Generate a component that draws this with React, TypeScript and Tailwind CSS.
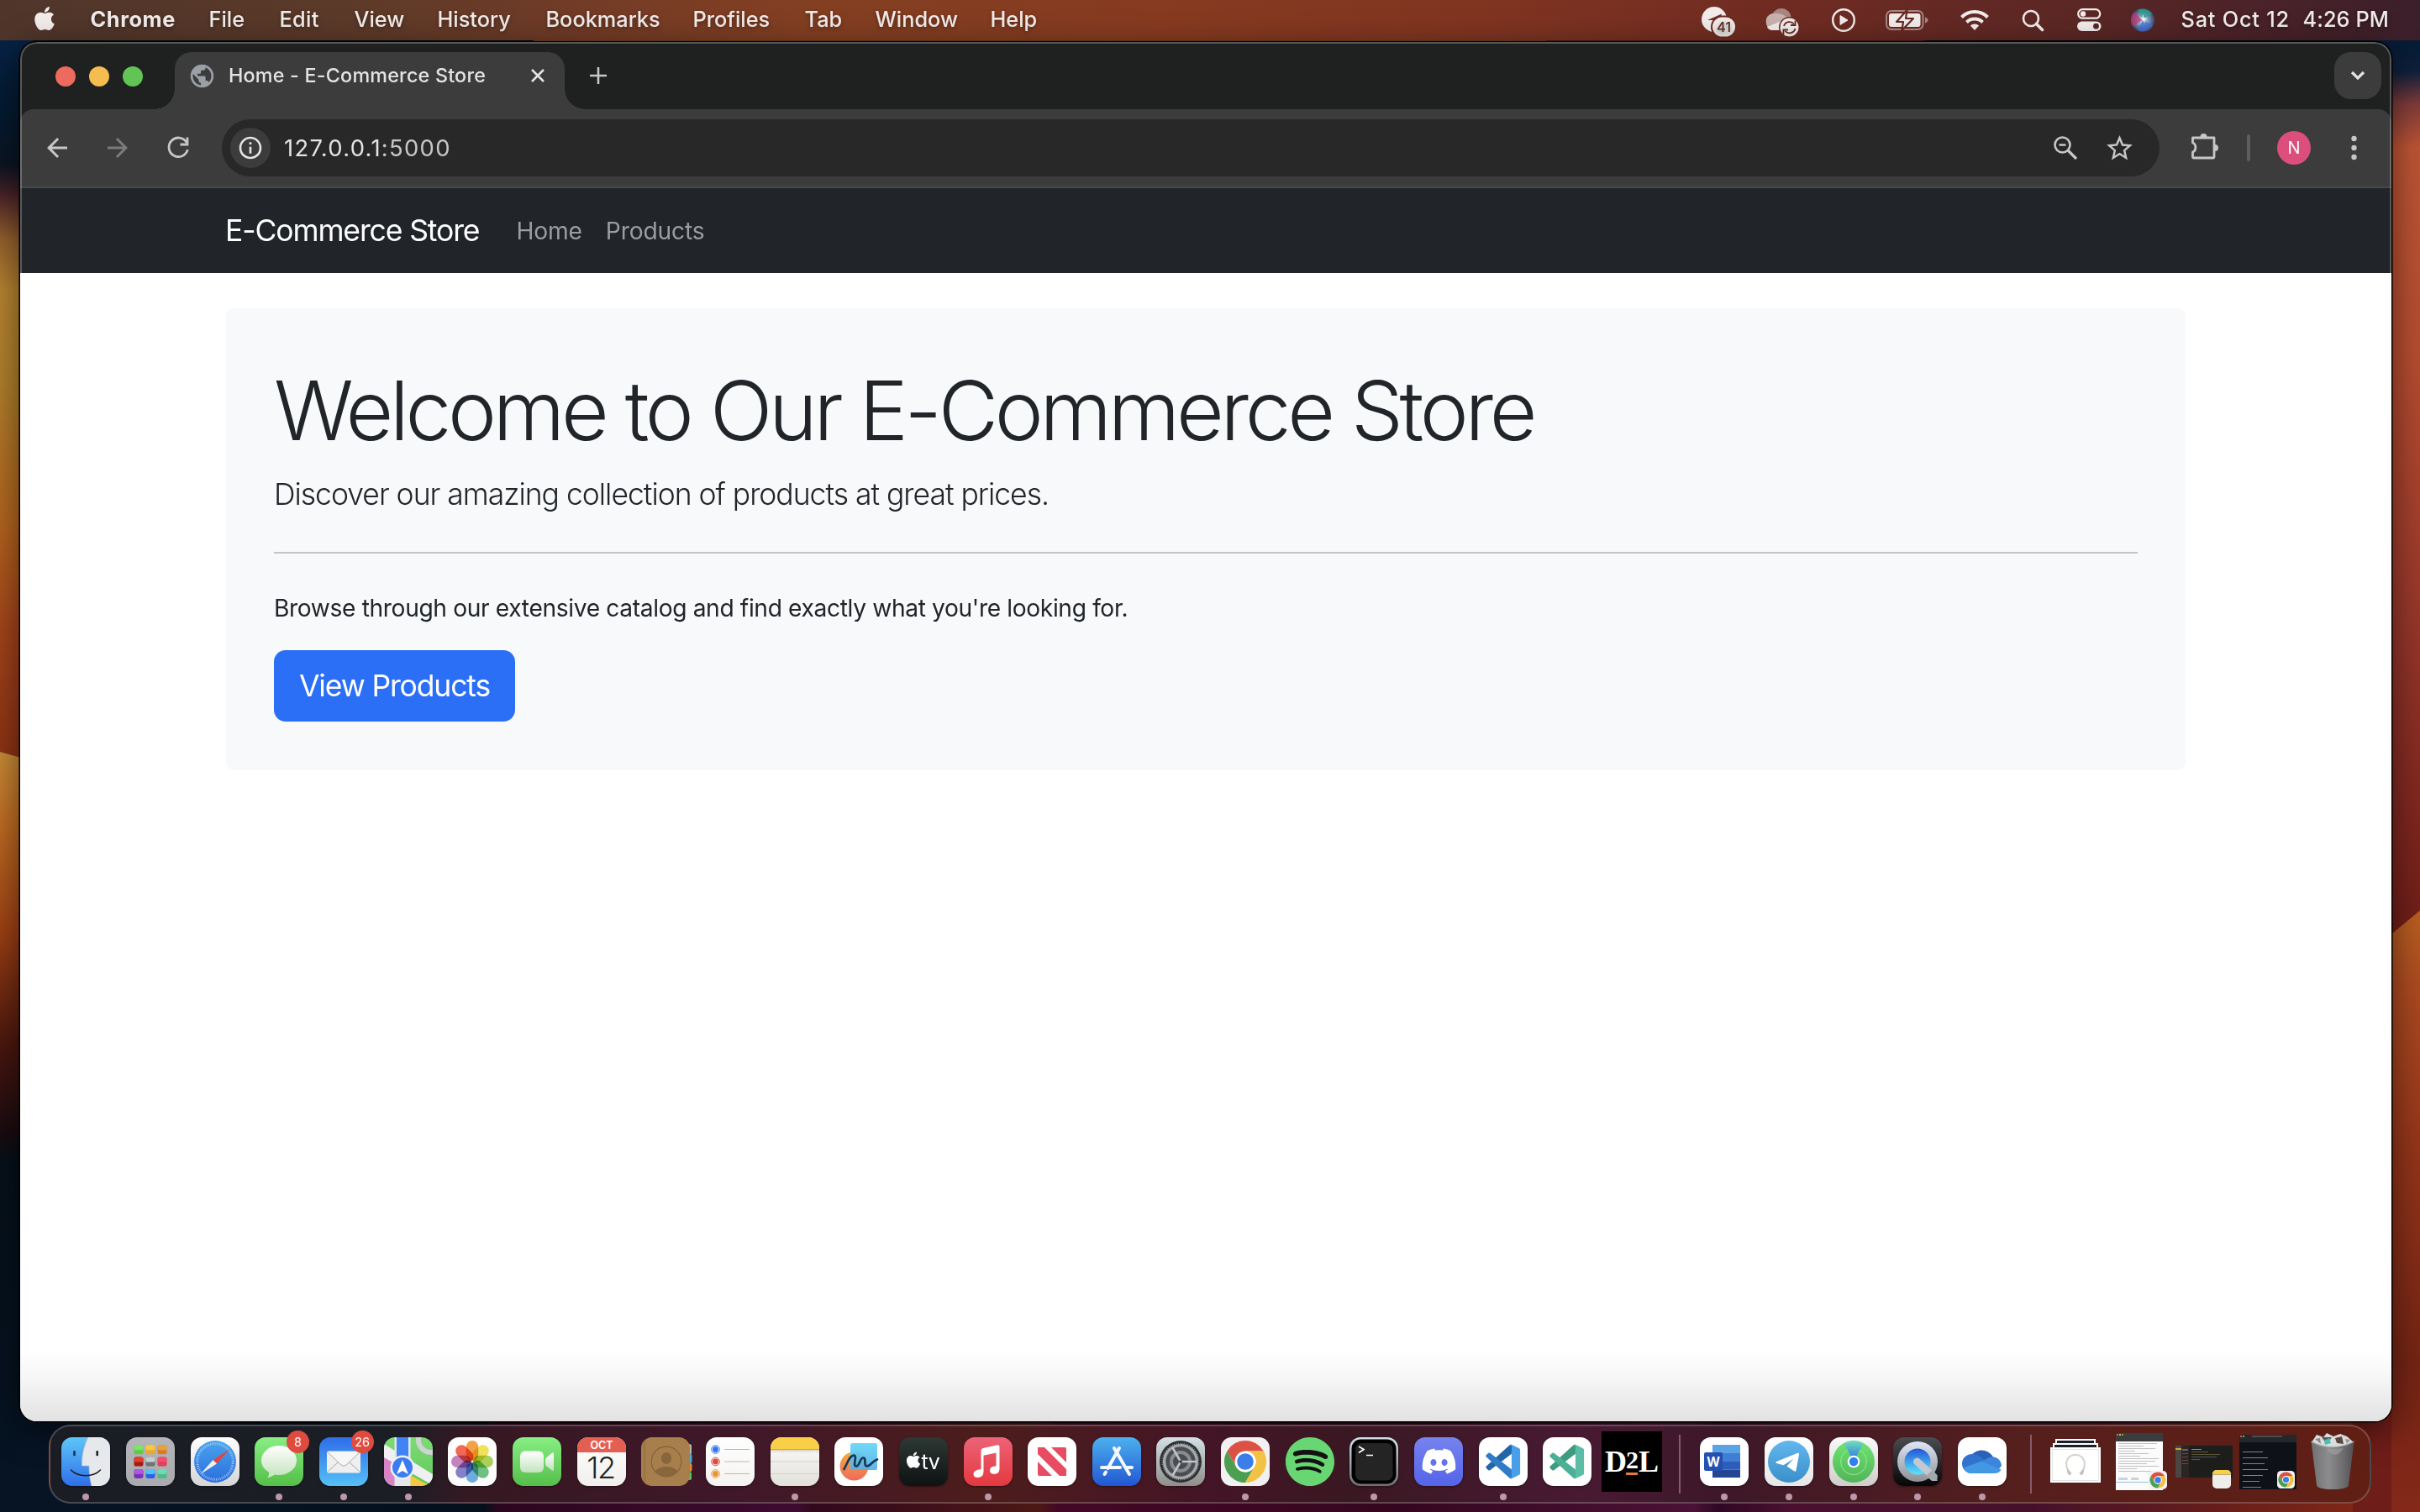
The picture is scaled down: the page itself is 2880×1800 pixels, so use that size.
import React from "react";
import { FaApple, FaDiscord, FaSpotify } from "react-icons/fa";
import { MdArrowBack, MdArrowForward, MdPublic, MdStarBorder, MdInfoOutline } from "react-icons/md";

/* ---------- Desktop wallpaper ---------- */

function Wallpaper() {
  return (
    <svg className="absolute inset-0" width="2880" height="1800" viewBox="0 0 2880 1800" preserveAspectRatio="none">
      <defs>
        <linearGradient id="wl" x1="0" y1="48" x2="0" y2="1800" gradientUnits="userSpaceOnUse">
          <stop offset="0" stopColor="#062244" />
          <stop offset="0.05" stopColor="#041a30" />
          <stop offset="0.085" stopColor="#0b1522" />
          <stop offset="0.105" stopColor="#4a2229" />
          <stop offset="0.135" stopColor="#94602c" />
          <stop offset="0.17" stopColor="#b78431" />
          <stop offset="0.23" stopColor="#b0802c" />
          <stop offset="0.33" stopColor="#b3641e" />
          <stop offset="0.4" stopColor="#a4441a" />
          <stop offset="0.49" stopColor="#8c3114" />
        </linearGradient>
        <linearGradient id="wl2" x1="0" y1="895" x2="0" y2="1800" gradientUnits="userSpaceOnUse">
          <stop offset="0" stopColor="#c98c36" />
          <stop offset="0.1" stopColor="#bd6a22" />
          <stop offset="0.24" stopColor="#9c3f14" />
          <stop offset="0.38" stopColor="#4d180f" />
          <stop offset="0.5" stopColor="#1a0b10" />
          <stop offset="0.54" stopColor="#05101a" />
          <stop offset="1" stopColor="#061424" />
        </linearGradient>
        <linearGradient id="wr" x1="2848" y1="60" x2="2880" y2="1110" gradientUnits="userSpaceOnUse">
          <stop offset="0" stopColor="#071c36" />
          <stop offset="0.025" stopColor="#10203c" />
          <stop offset="0.06" stopColor="#7c3a3a" />
          <stop offset="0.11" stopColor="#bc5434" />
          <stop offset="0.35" stopColor="#b54c30" />
          <stop offset="0.65" stopColor="#96362a" />
          <stop offset="1" stopColor="#6f1d18" />
        </linearGradient>
        <linearGradient id="wr2" x1="0" y1="1090" x2="0" y2="1800" gradientUnits="userSpaceOnUse">
          <stop offset="0" stopColor="#b85e20" />
          <stop offset="0.12" stopColor="#ab4a20" />
          <stop offset="0.4" stopColor="#93341a" />
          <stop offset="0.75" stopColor="#742414" />
          <stop offset="1" stopColor="#84281a" />
        </linearGradient>
        <linearGradient id="wb" x1="0" y1="0" x2="2880" y2="0" gradientUnits="userSpaceOnUse">
          <stop offset="0" stopColor="#061424" />
          <stop offset="0.2" stopColor="#04101c" />
          <stop offset="0.206" stopColor="#2c061e" />
          <stop offset="0.33" stopColor="#3e0b30" />
          <stop offset="0.336" stopColor="#32081c" />
          <stop offset="0.43" stopColor="#4c1816" />
          <stop offset="0.437" stopColor="#440826" />
          <stop offset="0.58" stopColor="#35061f" />
          <stop offset="0.7" stopColor="#4a1236" />
          <stop offset="0.71" stopColor="#2f0824" />
          <stop offset="0.74" stopColor="#4b1030" />
          <stop offset="0.84" stopColor="#45112a" />
          <stop offset="0.93" stopColor="#6c2018" />
          <stop offset="1" stopColor="#8a2a18" />
        </linearGradient>
      </defs>
      <rect width="2880" height="1800" fill="#04101a" />
      <path d="M0 48H40V906L0 895Z" fill="url(#wl)" />
      <path d="M0 895L40 906V1800H0Z" fill="url(#wl2)" />
      <rect x="24" y="1650" width="2824" height="150" fill="url(#wb)" />
      <path d="M2800 48H2880V1800H2800Z" fill="url(#wr)" />
      <path d="M2846 1112L2880 1084V1800H2846Z" fill="url(#wr2)" />
      <path d="M635 48H1840" stroke="#c9752a" strokeWidth="4" />
      <path d="M1840 48H2290" stroke="#8a3220" strokeWidth="4" />
    </svg>
  );
}

/* ---------- Menu bar ---------- */

const INK = "#f2eceb";

function StatusIcons() {
  return (
    <>
      <svg className="ml-0" width="42" height="48" viewBox="0 0 42 48">
        <circle cx="15" cy="23" r="15" fill={INK} />
        <path d="M7 24L24 16.500L21 26L14 24Z" fill="#6d2b21" />
        <rect x="11" y="18.500" width="31" height="27" rx="13.500" fill="#6d2b21" />
        <rect x="13" y="20.500" width="27" height="23" rx="11.500" fill={INK} />
        <text x="26.500" y="38" textAnchor="middle" fontSize="16.500" fontWeight="500" fill="#5b2a20" fontFamily="Inter, sans-serif">41</text>
      </svg>
      <svg className="ml-[33px]" width="44" height="48" viewBox="0 0 44 48">
        <circle cx="20" cy="21.500" r="11.500" fill="#a98680" />
        <path d="M9 16A10.500 10.500 0 0 0 9 36H20L30 24Q22 14 9 16Z" fill="#c9b1ad" />
        <path d="M3 32L30 21V36H9Q5 36 3 32Z" fill={INK} />
        <circle cx="29.500" cy="32.500" r="12.500" fill="#6a2a21" />
        <circle cx="29.500" cy="32.500" r="11" fill={INK} />
        <path d="M23 31A7 7 0 0 1 35 28.500M36.500 34A7 7 0 0 1 24.500 37" stroke="#64291f" strokeWidth="1.800" fill="none" />
        <path d="M36.500 24.500V30H31M22.500 41V35.500H28" stroke="#64291f" strokeWidth="1.800" fill="none" />
      </svg>
      <svg className="ml-[35px]" width="30" height="48" viewBox="0 0 30 48">
        <circle cx="15" cy="24" r="12.800" fill="none" stroke={INK} strokeWidth="2.400" />
        <path d="M11 18.500V29.500L20 24Z" fill={INK} stroke={INK} strokeWidth="1" strokeLinejoin="round" />
      </svg>
      <svg className="ml-[34px]" width="53" height="48" viewBox="0 0 53 48">
        <rect x="2" y="13" width="43.500" height="22" rx="6" fill="none" stroke="#a98680" strokeWidth="2" />
        <rect x="5" y="16" width="37.500" height="16" rx="3" fill={INK} />
        <path d="M48 20.500C50.500 21.500 51.500 22.500 51.500 24S50.500 26.500 48 27.500Z" fill="#a98680" />
        <path d="M26.500 12L14 26H22L20.500 36L34 22H25Z" fill={INK} stroke="#66281f" strokeWidth="2.200" strokeLinejoin="round" />
      </svg>
      <svg className="ml-[36px]" width="36" height="48" viewBox="0 0 36 48">
        <g fill="none" stroke={INK} strokeWidth="4">
          <path d="M2.500 20.500A22 22 0 0 1 33.500 20.500" />
          <path d="M8.500 26.500A13.500 13.500 0 0 1 27.500 26.500" />
        </g>
        <path d="M18 36L12.800 30.500A7.500 7.500 0 0 1 23.200 30.500Z" fill={INK} />
      </svg>
      <svg className="ml-[38px]" width="27" height="48" viewBox="0 0 27 48">
        <circle cx="11" cy="22" r="9" fill="none" stroke={INK} strokeWidth="2.600" />
        <path d="M17.500 28.500L24.500 35.500" stroke={INK} strokeWidth="3.600" strokeLinecap="round" />
      </svg>
      <svg className="ml-[38px]" width="30" height="48" viewBox="0 0 30 48">
        <rect x="2.200" y="11.200" width="26" height="10.500" rx="5.250" fill="none" stroke={INK} strokeWidth="2.200" />
        <circle cx="8" cy="16.500" r="3.200" fill={INK} />
        <rect x="1" y="25.500" width="28.500" height="11.500" rx="5.750" fill={INK} />
        <circle cx="23.500" cy="31.200" r="3.400" fill="#55262a" />
      </svg>
      <svg className="ml-[35px]" width="28" height="48" viewBox="0 0 28 48">
        <defs>
          <radialGradient id="siri" cx="0.500" cy="0.500" r="0.550">
            <stop offset="0" stopColor="#ffffff" />
            <stop offset="0.300" stopColor="#9db4d8" />
            <stop offset="1" stopColor="#27375e" />
          </radialGradient>
        </defs>
        <circle cx="14" cy="24" r="14" fill="url(#siri)" />
        <path d="M14 24L4 14A14 14 0 0 0 2 31Z" fill="#c4336d" opacity="0.700" />
        <path d="M14 24L8 12A14 14 0 0 1 25 16Z" fill="#2aa58a" opacity="0.700" />
        <path d="M14 24L8 36A14 14 0 0 0 26 30Z" fill="#3d6fd8" opacity="0.700" />
        <path d="M14 24l-4-4 3.500 1.500 0.500-5 1.500 5 4-0.500-3.500 3 1 4z" fill="#fff" opacity="0.900" />
      </svg>
    </>
  );
}

function MenuBar() {
  return (
    <header className="relative flex h-12 shrink-0 items-center bg-[linear-gradient(90deg,#4f352b_0%,#5b3a29_14%,#703b27_23%,#833f22_33%,#873b20_48%,#7f3421_62%,#6f2b22_74%,#5b2725_86%,#3b1f2b_100%)] text-[25.3px] font-medium text-[#f2eceb] [text-shadow:0_2px_5px_rgba(0,0,0,0.35)]">
      <FaApple className="mb-1 ml-[37px] mr-[38.500px] h-[32px] w-[32px]" />
      <nav className="flex items-center whitespace-nowrap pb-[3px]">
        <span className="w-[141px] font-bold tracking-[0.6px]">Chrome</span>
        <span className="w-[84px]">File</span>
        <span className="w-[89px] tracking-[0.3px]">Edit</span>
        <span className="w-[99px]">View</span>
        <span className="w-[129px]">History</span>
        <span className="w-[175px]">Bookmarks</span>
        <span className="w-[133px]">Profiles</span>
        <span className="w-[84px]">Tab</span>
        <span className="w-[137px]">Window</span>
        <span>Help</span>
      </nav>
      <div className="ml-auto flex items-center pr-[37px]">
        <StatusIcons />
        <div className="ml-[31.500px] flex w-[247.500px] justify-between whitespace-nowrap pb-[3px]">
          <span className="tracking-[0.8px]">Sat Oct 12</span>
          <span className="tracking-[0.1px]">4:26 PM</span>
        </div>
      </div>
    </header>
  );
}

/* ---------- Browser window ---------- */

function TabStrip() {
  return (
    <div className="flex h-20 shrink-0 items-start bg-[#1f2120] pt-3">
      <div className="flex gap-4 pl-[42px] pt-[17px]">
        <span className="h-6 w-6 rounded-full bg-[#ed6a5e]" />
        <span className="h-6 w-6 rounded-full bg-[#f5bd4f]" />
        <span className="h-6 w-6 rounded-full bg-[#61c454]" />
      </div>
      <div className="relative ml-[38px] flex h-[68px] w-[464px] items-start rounded-t-[20px] bg-[#3c3c3c] pl-[17px] pt-[11px] text-[#e3e3e3] before:absolute before:-left-6 before:bottom-0 before:h-6 before:w-6 before:bg-[radial-gradient(circle_at_0_0,transparent_23.5px,#3c3c3c_24px)] after:absolute after:-right-6 after:bottom-0 after:h-6 after:w-6 after:bg-[radial-gradient(circle_at_100%_0,transparent_23.5px,#3c3c3c_24px)]">
        <div className="flex h-[34px] w-full items-center">
          <MdPublic className="h-[33px] w-[33px] -ml-[1px] text-[#9aa0a6]" />
          <span className="ml-[15px] whitespace-nowrap text-[23.3px] font-medium tracking-[0.22px]">Home - E-Commerce Store</span>
          <svg className="ml-auto mr-[23px]" width="18" height="18" viewBox="0 0 18 18" stroke="#e3e3e3" strokeWidth="2.600">
            <path d="M2 2L16 16M16 2L2 16" />
          </svg>
        </div>
      </div>
      <svg className="ml-[29px] mt-[17px]" width="22" height="22" viewBox="0 0 22 22" stroke="#c7c7c7" strokeWidth="2.600">
        <path d="M11 1V21M1 11H21" />
      </svg>
      <div className="ml-auto mr-[12px] flex h-14 w-14 items-center justify-center rounded-[20px] bg-[#3c3c3c]">
        <svg width="18" height="12" viewBox="0 0 18 12" fill="none" stroke="#e3e3e3" strokeWidth="3.200">
          <path d="M2 2L9 9L16 2" />
        </svg>
      </div>
    </div>
  );
}

function Toolbar() {
  return (
    <div className="bg-[#1f2120]">
      <div className="flex h-[94px] items-center rounded-t-[16px] border-b-2 border-[#474747] bg-[#3c3c3c] text-[#c7c7c7]">
        <MdArrowBack className="ml-[26px] h-9 w-9" />
        <MdArrowForward className="ml-9 h-9 w-9 text-[#7b7b7b]" />
        <svg className="ml-[40px]" width="28" height="28" viewBox="0 0 28 28" fill="none" stroke="#c7c7c7" strokeWidth="2.800">
          <path d="M24 7.500A11.300 11.300 0 1 0 25.300 16" />
          <path d="M25 1.500V10H16.500" />
        </svg>
        <div className="ml-[38px] flex h-[68px] w-[2306px] items-center rounded-full bg-[#282828] pl-[10px]">
          <div className="flex h-12 w-12 items-center justify-center rounded-full bg-[#3c3c3c]">
            <MdInfoOutline className="h-8 w-8 text-[#e3e3e3]" />
          </div>
          <span className="ml-[16px] pt-[1px] text-[27.4px] tracking-[1.3px] text-[#e3e3e3]">
            127.0.0.1<span className="text-[#c7c7c7]">:5000</span>
          </span>
          <svg className="ml-auto" width="30" height="30" viewBox="0 0 30 30" fill="none" stroke="#c7c7c7">
            <circle cx="11.500" cy="11.500" r="9" strokeWidth="2.600" />
            <path d="M7.500 11.500H15.500" strokeWidth="2.400" />
            <path d="M18 18L28 28" strokeWidth="3.200" />
          </svg>
          <MdStarBorder className="ml-[31px] mr-[29px] h-[37px] w-[37px]" />
        </div>
        <svg className="ml-[36px]" width="36" height="36" viewBox="0 0 36 36" fill="none" stroke="#c7c7c7" strokeWidth="2.800" strokeLinejoin="round">
          <path d="M3.500 6H29V29Q29 30 28 30H4.500Q3.500 30 3.500 29V23C8 21.500 8 13.500 3.500 12Z" />
          <path d="M12.500 5A4 4 0 0 1 20.500 5ZM30 14A4 4 0 0 1 30 22Z" fill="#c7c7c7" stroke="none" />
        </svg>
        <span className="ml-[32px] h-8 w-1 rounded bg-[#5e5e5e]" />
        <span className="ml-[32px] flex h-10 w-10 items-center justify-center rounded-full bg-[#dc4e7c] text-[20px] text-white">N</span>
        <svg className="ml-[48px]" width="7" height="30" viewBox="0 0 7 30" fill="#c7c7c7">
          <circle cx="3.500" cy="4" r="3.200" />
          <circle cx="3.500" cy="15" r="3.200" />
          <circle cx="3.500" cy="26" r="3.200" />
        </svg>
      </div>
    </div>
  );
}

function StorePage() {
  return (
    <div className="flex grow flex-col bg-white text-[#212529]">
      <nav className="flex h-[101px] items-center bg-[#212529] pl-[244px] text-white">
        <a className="whitespace-nowrap text-[35.500px] tracking-[-1.120px]">E-Commerce Store</a>
        <a className="ml-[44px] pt-[1px] text-[28.200px] tracking-[-0.150px] text-[#9b9d9f]">Home</a>
        <a className="ml-[28px] pt-[1px] text-[28.200px] tracking-[-0.150px] text-[#9b9d9f]">Products</a>
      </nav>
      <main className="mx-[245px] mt-[42px] rounded-[9px] bg-[#f8f9fa] px-[57px] pb-[58px] pt-[61px]">
        <h1 className="h-[121px] whitespace-nowrap text-[98px] font-light leading-[121px] tracking-[-4.300px]">
          Welcome to Our E-Commerce Store
        </h1>
        <p className="mt-[13px] whitespace-nowrap text-[35.500px] font-light leading-[54px] tracking-[-1.010px]">
          Discover our amazing collection of products at great prices.
        </p>
        <hr className="mt-[41px] h-[2px] border-0 bg-[#c3c4c6]" />
        <p className="mt-[44px] whitespace-nowrap text-[28.200px] leading-[43px] tracking-[-0.370px]">
          Browse through our extensive catalog and find exactly what you're looking for.
        </p>
        <a className="mt-[28px] flex h-[85px] w-[287px] items-center justify-center whitespace-nowrap rounded-[14px] bg-[#2b6ff6] pt-[1px] text-[35.500px] tracking-[-1.150px] text-white">
          View Products
        </a>
      </main>
      <div className="mt-auto h-[84px] bg-[linear-gradient(180deg,#ffffff_0%,#f7f7f7_35%,#e2e2e2_100%)]" />
    </div>
  );
}

function BrowserWindow() {
  return (
    <section className="relative ml-6 mt-[2px] flex h-[1642px] w-[2822px] shrink-0 flex-col overflow-hidden rounded-[20px] shadow-[0_0_0_1.500px_#000,0_10px_40px_rgba(0,0,0,0.55)]">
      <TabStrip />
      <Toolbar />
      <StorePage />
      <div className="pointer-events-none absolute inset-0 rounded-[20px] border-2 border-b-0 border-white/25 [mask-image:linear-gradient(#000_275px,transparent_275px)]" />
    </section>
  );
}

/* ---------- Dock icons ---------- */

function Tile({ from, to, children }: { from: string; to: string; children?: React.ReactNode }) {
  const id = "g" + (from + to).replace(/#/g, "");
  return (
    <svg width="58" height="58" viewBox="0 0 58 58" className="rounded-[13px] shadow-[0_1px_3px_rgba(0,0,0,0.4)]">
      <defs>
        <linearGradient id={id} x1="0" y1="0" x2="0" y2="1">
          <stop offset="0" stopColor={from} />
          <stop offset="1" stopColor={to} />
        </linearGradient>
      </defs>
      <rect width="58" height="58" fill={`url(#${id})`} />
      {children}
    </svg>
  );
}

function Finder() {
  return (
    <Tile from="#5ec6f8" to="#2f6fe9">
      <path d="M32 0C27 10 24 22 24.500 34H33C33 43 34 51 36 58H58V0Z" fill="#e6e8ec" />
      <path d="M32 0C27 10 24 22 24.500 34H33C33 43 34 51 36 58" fill="none" stroke="#b9c6d8" strokeWidth="0.600" />
      <rect x="14.200" y="16" width="2.600" height="6.200" rx="1" fill="#16324d" />
      <rect x="41.400" y="16" width="2.600" height="6.200" rx="1" fill="#222" />
      <path d="M11.500 39Q18 45.700 29 45.700T46.500 39" fill="none" stroke="#1a1f26" strokeWidth="1.600" strokeLinecap="round" />
    </Tile>
  );
}

function Launchpad() {
  const colors = [
    ["#7ee36a", "#5ccb46"], ["#f8c83f", "#eaa92e"], ["#eda03a", "#d97a27"],
    ["#e0402f", "#a8190f"], ["#c9cdd1", "#6f7478"], ["#f0506a", "#e23f5a"],
    ["#b055e0", "#7c2fb8"], ["#4fc2fa", "#2a62e8"], ["#6fd9b4", "#4fb98a"],
  ];
  return (
    <Tile from="#b3b5b8" to="#a9abae">
      {colors.map(([a, b], i) => (
        <g key={i} transform={`translate(${9.500 + (i % 3) * 14} ${9.300 + Math.floor(i / 3) * 14.300})`}>
          <rect width="11" height="11" rx="2.600" fill={b} />
          <rect width="11" height="6" rx="2.600" fill={a} />
        </g>
      ))}
    </Tile>
  );
}

function Safari() {
  return (
    <Tile from="#ffffff" to="#d5d5d5">
      <defs>
        <linearGradient id="saf" x1="0" y1="0" x2="0" y2="1">
          <stop offset="0" stopColor="#4aa4ee" />
          <stop offset="1" stopColor="#2c6ede" />
        </linearGradient>
      </defs>
      <circle cx="29" cy="29" r="25" fill="url(#saf)" />
      <circle cx="29" cy="29" r="21.300" fill="none" stroke="#c3dcf8" strokeWidth="3" strokeDasharray="0.700 1.530" />
      <path d="M46.500 14L31 31.500L26.500 27Z" fill="#e0473c" />
      <path d="M11.500 44L31 31.500L26.500 27Z" fill="#eef1f5" />
    </Tile>
  );
}

function Messages() {
  return (
    <Tile from="#88ee84" to="#54bf48">
      <defs>
        <linearGradient id="bub" x1="0" y1="0" x2="0" y2="1">
          <stop offset="0" stopColor="#ffffff" />
          <stop offset="1" stopColor="#c7e4c0" />
        </linearGradient>
      </defs>
      <ellipse cx="29" cy="27.500" rx="21" ry="17.500" fill="url(#bub)" />
      <path d="M17 40Q18 45 15 48Q21 47.500 25 43Z" fill="#cde8c6" />
    </Tile>
  );
}

function Mail() {
  return (
    <Tile from="#2f6de8" to="#56c0f7">
      <rect x="9" y="16.500" width="40" height="26" rx="2" fill="#efefef" />
      <path d="M9.500 41.500L22.500 29.500M48.500 41.500L35.500 29.500" stroke="#9d9d9d" strokeWidth="0.900" />
      <path d="M9.500 17.500L26 33Q29 35.600 32 33L48.500 17.500" fill="#f7f7f7" stroke="#a9a9a9" strokeWidth="1" />
    </Tile>
  );
}

function Maps() {
  return (
    <Tile from="#7edb74" to="#62c95c">
      <path d="M0 22L30 45V58H0Z" fill="#d783c6" />
      <path d="M22 40L58 60H22Z" fill="#f6c83f" />
      <path d="M0 8L58 44V57L0 24Z" fill="#f0f0f3" />
      <rect x="12.500" width="19" height="58" fill="#e4e6ea" />
      <rect x="15" width="14" height="40" fill="#3f83f4" />
      <circle cx="56" cy="3" r="15" fill="none" stroke="#cfd3d6" strokeWidth="6" />
      <circle cx="22" cy="36" r="14.500" fill="#eceef2" />
      <circle cx="22" cy="36" r="12" fill="#3b7cf0" />
      <path d="M22 27L29 44L22 40L15 44Z" fill="#fff" />
    </Tile>
  );
}

function Photos() {
  const petals = ["#f29a38", "#efe04a", "#a5cf4f", "#67bd7c", "#62a8dc", "#7d78c4", "#c07ab8", "#ef5b4a"];
  return (
    <Tile from="#ffffff" to="#fbfbfb">
      <g className="[&>rect]:mix-blend-multiply">
        {petals.map((c, i) => (
          <rect key={c} x="21.800" y="4" width="14.400" height="24" rx="7.200" fill={c} opacity="0.920" transform={`rotate(${i * 45} 29 29)`} />
        ))}
      </g>
    </Tile>
  );
}

function FaceTime() {
  return (
    <Tile from="#87ef83" to="#56be4a">
      <defs>
        <linearGradient id="ft" x1="0" y1="0" x2="0" y2="1">
          <stop offset="0" stopColor="#ffffff" />
          <stop offset="1" stopColor="#c3e3bd" />
        </linearGradient>
      </defs>
      <rect x="9" y="16.500" width="28" height="25.500" rx="6" fill="url(#ft)" />
      <path d="M39 27Q39 25.500 40.500 24L47 18.800Q49 17.500 49 20V38Q49 40.500 47 39.500L40.500 34.500Q39 33.500 39 31.500Z" fill="url(#ft)" />
    </Tile>
  );
}

function CalendarIcon() {
  return (
    <Tile from="#ffffff" to="#f0efed">
      <rect width="58" height="18" fill="#e35f52" />
      <text x="29" y="14" textAnchor="middle" fontSize="12.500" fontWeight="600" fill="#fff" fontFamily="Inter, sans-serif">OCT</text>
      <text x="28" y="49" textAnchor="middle" fontSize="36" fontWeight="300" letterSpacing="-1.500" fill="#262626" fontFamily="Inter, sans-serif">12</text>
    </Tile>
  );
}

function Contacts() {
  return (
    <svg width="62" height="58" viewBox="0 0 62 58" className="ml-1">
      <rect x="46" y="8" width="14" height="13" rx="2.500" fill="#b9b4a8" />
      <rect x="46" y="20" width="14.500" height="11" rx="2" fill="#4fa6d8" />
      <rect x="46" y="31" width="14.500" height="10" rx="2" fill="#e58a34" />
      <rect x="46" y="41" width="14" height="10" rx="2.500" fill="#5cc35c" />
      <rect width="58" height="58" rx="13" fill="#a67f4c" />
      <path d="M4 4V54" stroke="#8b693c" strokeWidth="1" />
      <circle cx="30" cy="29" r="17.800" fill="none" stroke="#83623a" strokeWidth="1.200" />
      <ellipse cx="30" cy="25" rx="6" ry="7" fill="#87663d" />
      <path d="M16.500 40.500Q21 35 30 35T43.500 40.500A17.800 17.800 0 0 1 16.500 40.500Z" fill="#87663d" />
    </svg>
  );
}

function Reminders() {
  return (
    <Tile from="#ffffff" to="#f4f3f1">
      {["#2f74ee", "#dd4a40", "#e8952f"].map((c, i) => (
        <g key={c} transform={`translate(0 ${14.500 + i * 14.500})`}>
          <circle cx="11.500" r="4.800" fill="none" stroke={c} strokeWidth="1" />
          <circle cx="11.500" r="3.400" fill={c} />
          <path d="M22 0H52" stroke="#b9b9b9" strokeWidth="1" />
        </g>
      ))}
    </Tile>
  );
}

function Notes() {
  return (
    <Tile from="#fdfdfb" to="#e3e0db">
      <rect width="58" height="14" fill="#f8cf47" />
      <rect y="14" width="58" height="1.500" fill="#bda77a" />
      <path d="M1 17.300H58" stroke="#aaa" strokeWidth="0.900" strokeDasharray="1 1.300" />
      <path d="M0 29H58M0 43.500H58" stroke="#cfcdc9" strokeWidth="0.900" />
    </Tile>
  );
}

function Freeform() {
  return (
    <Tile from="#ffffff" to="#fefefe">
      <defs>
        <linearGradient id="ffo" x1="0" y1="0" x2="0" y2="1">
          <stop offset="0" stopColor="#f3ad3c" />
          <stop offset="1" stopColor="#ee6a5e" />
        </linearGradient>
        <linearGradient id="ffb" x1="0" y1="0" x2="0" y2="1">
          <stop offset="0" stopColor="#65d6fb" />
          <stop offset="1" stopColor="#5aaee0" />
        </linearGradient>
      </defs>
      <circle cx="23.500" cy="34.500" r="17" fill="url(#ffo)" />
      <rect x="19" y="7" width="32" height="32" rx="2.500" fill="url(#ffb)" opacity="0.930" />
      <path d="M11.500 38C16 30 18 22 23 21.500C28 21.500 21 34.500 26 34.500C30.500 34 30 24.500 34.500 24.500C38.500 24.500 34 34.500 39 34.500C43.500 34 45 28 51 26.500" fill="none" stroke="#123a5c" strokeWidth="2.700" strokeLinecap="round" />
    </Tile>
  );
}

function AppleTV() {
  return (
    <Tile from="#2d3834" to="#0e1213">
      <foreignObject x="7" y="16" width="20" height="24">
        <FaApple className="h-[22px] w-[20px] text-white" />
      </foreignObject>
      <text x="26.500" y="37.500" fontSize="25" fill="#fff" fontFamily="Inter, sans-serif" letterSpacing="-0.500">tv</text>
    </Tile>
  );
}

function Music() {
  return (
    <Tile from="#ec6377" to="#e5383f">
      <path d="M20.500 16.500Q20.500 13.500 23 13L40 9.200Q42.500 8.800 42.500 11.500V37.500Q42.500 43.800 36 43.800Q31 43.800 31 39.500Q31 34.500 38.500 34.200V18.500L23.500 21.800V41Q23.500 48 16.500 48Q11.500 48 11.500 43.500Q11.500 39 20.500 38Z" fill="#fff" />
    </Tile>
  );
}

function News() {
  return (
    <Tile from="#ffffff" to="#fefefe">
      <path d="M12 12H20L46 38V46H38L12 20Z" fill="#e74c62" />
      <path d="M28 12H44Q46 12 46 14V30Z" fill="#e74c62" />
      <path d="M12 29L29 46H14Q12 46 12 44Z" fill="#e74c62" />
    </Tile>
  );
}

function AppStore() {
  return (
    <Tile from="#4cb0ee" to="#2257d3">
      <g stroke="#f4f8ff" strokeWidth="4" strokeLinecap="round">
        <path d="M32 13L18.500 37" />
        <path d="M26 13L44 44" />
        <path d="M11 36H33M39.500 36H47" />
        <path d="M16 41.500L14.500 44" />
      </g>
    </Tile>
  );
}

function Settings() {
  return (
    <Tile from="#d3e0e6" to="#8f8e8a">
      <circle cx="29" cy="29" r="25" fill="#33363a" />
      <circle cx="29" cy="29" r="22.500" fill="#8a8d90" stroke="#25272a" strokeWidth="3" strokeDasharray="1.200 1.200" />
      <circle cx="29" cy="29" r="19.500" fill="none" stroke="#a9acaf" strokeWidth="2.600" />
      <circle cx="29" cy="29" r="17.500" fill="#4a4d51" />
      <circle cx="29" cy="29" r="11" fill="none" stroke="#898c8f" strokeWidth="4" />
      <circle cx="29" cy="29" r="7.500" fill="#4a4d51" />
      <path d="M29 29H48M29 29L19.500 12.500M29 29L19.500 45.500" stroke="#c1c4c7" strokeWidth="2.600" />
      <circle cx="29" cy="29" r="1.800" fill="#3a3d40" />
    </Tile>
  );
}

function ChromeGlyph({ size }: { size: number }) {
  return (
    <svg width={size} height={size} viewBox="0 0 58 58" className="rounded-[22%]">
      <rect width="58" height="58" fill="#f2f1f2" />
      <g transform="translate(4 4) scale(1.042)">
        <path d="M44.800 12H24L13.600 30L3.200 12A24 24 0 0 1 44.800 12Z" fill="#dd5144" />
        <path d="M3.200 12L13.600 30A12 12 0 0 0 34.400 30L24 48A24 24 0 0 1 3.200 12Z" fill="#4c9f51" />
        <path d="M44.800 12H24A12 12 0 0 1 34.400 30L24 48A24 24 0 0 0 44.800 12Z" fill="#f3c144" />
        <circle cx="24" cy="24" r="12" fill="#fff" />
        <circle cx="24" cy="24" r="9.400" fill="#3b7de9" />
      </g>
    </svg>
  );
}

function Terminal() {
  return (
    <Tile from="#cfe2ea" to="#6e7072">
      <rect x="2.500" y="2.500" width="53" height="53" rx="11" fill="#000" />
      <rect x="7" y="7" width="44.500" height="44.500" rx="7" fill="#242424" />
      <path d="M11 11L17 14.500L11 18.500" fill="none" stroke="#fff" strokeWidth="1.700" />
      <path d="M20 21.500H28" stroke="#fff" strokeWidth="1.500" />
    </Tile>
  );
}

function Discord() {
  return (
    <Tile from="#7683ee" to="#5564ea">
      <foreignObject x="7.500" y="7" width="44" height="44">
        <FaDiscord className="h-[43px] w-[43px] text-white" />
      </foreignObject>
    </Tile>
  );
}

function Code({ dark, mid, light }: { dark: string; mid: string; light: string }) {
  return (
    <Tile from="#ffffff" to="#fefefe">
      <g transform="translate(8.300 8.600) scale(1.700)">
        <path d="M0.326 15.260L16.505 0.500Q17.300 -0.100 18.210 0.210L18.004 6.552L2.926 17.997A1 1 0 0 1 1.650 17.940L0.327 16.739A1 1 0 0 1 0.326 15.260Z" fill={dark} />
        <path d="M0.326 8.740L16.505 23.500Q17.300 24.100 18.210 23.790L18.004 17.448L2.926 6.003A1 1 0 0 0 1.650 6.060L0.327 7.261A1 1 0 0 0 0.326 8.740Z" fill={mid} />
        <path d="M18.210 0.210L23.150 2.587A1.500 1.500 0 0 1 24 3.939V20.060A1.500 1.500 0 0 1 23.150 21.413L18.210 23.790Q17.300 24.100 16.505 23.500Q18 23.800 18.004 22.500V1.500Q18 0.200 16.505 0.500Q17.300 -0.100 18.210 0.210Z" fill={light} />
      </g>
    </Tile>
  );
}

function D2L() {
  return (
    <div className="relative flex h-[72px] w-[72px] items-center justify-center bg-black font-['Liberation_Serif',serif] text-[36px] font-bold text-white">
      <span className="tracking-[-1px]">D</span>
      <span className="relative -top-[3px] text-[30px] after:absolute after:bottom-[4px] after:left-0 after:h-[2.500px] after:w-[14px] after:bg-[#e27b35]">2</span>
      <span>L</span>
    </div>
  );
}

function Word() {
  return (
    <Tile from="#ffffff" to="#fefefe">
      <g>
        <rect x="15" y="9" width="33" height="10" fill="#5ba3e6" />
        <rect x="15" y="19" width="33" height="10" fill="#3f7fd3" />
        <rect x="15" y="29" width="33" height="9.500" fill="#2c5dbb" />
        <rect x="15" y="38.500" width="33" height="9.500" fill="#234592" />
      </g>
      <rect x="5" y="18" width="22" height="22" rx="2" fill="#2450b0" />
      <text x="16" y="34.500" textAnchor="middle" fontSize="15.500" fontWeight="700" fill="#fff" fontFamily="Open Sans, sans-serif">W</text>
    </Tile>
  );
}

function Telegram() {
  return (
    <Tile from="#ffffff" to="#e6e6e6">
      <defs>
        <linearGradient id="tg" x1="0" y1="0" x2="0" y2="1">
          <stop offset="0" stopColor="#63b7ef" />
          <stop offset="1" stopColor="#3a8fca" />
        </linearGradient>
      </defs>
      <circle cx="29" cy="29" r="25" fill="url(#tg)" />
      <path d="M14 29L39.500 18.800Q41.500 18.300 41 20.500L37.500 39.500Q36.800 41.500 35 40.300L26.500 34.500L34.500 25.500L22.500 33.300L14.300 31Q12.500 30 14 29Z" fill="#fff" />
    </Tile>
  );
}

function FindMy() {
  return (
    <Tile from="#fafafa" to="#cfcdcb">
      <defs>
        <linearGradient id="fm" x1="0" y1="0" x2="0" y2="1">
          <stop offset="0" stopColor="#6de56f" />
          <stop offset="1" stopColor="#52b45a" />
        </linearGradient>
        <linearGradient id="fmb" x1="0" y1="0" x2="0" y2="1">
          <stop offset="0" stopColor="#6fe0b8" />
          <stop offset="1" stopColor="#2a68f0" />
        </linearGradient>
      </defs>
      <circle cx="29" cy="29" r="25" fill="url(#fm)" />
      <circle cx="29" cy="29" r="15.500" fill="none" stroke="#93ea90" strokeWidth="1" />
      <path d="M29 29L17.500 7A25 25 0 0 1 40.500 7Z" fill="url(#fmb)" />
      <circle cx="29" cy="29" r="7.300" fill="#fff" />
      <circle cx="29" cy="29" r="5.200" fill="#2f7ff0" />
    </Tile>
  );
}

function QuickTime() {
  return (
    <Tile from="#4a4c50" to="#060607">
      <defs>
        <linearGradient id="qtr" x1="0" y1="0" x2="0" y2="1">
          <stop offset="0" stopColor="#dfe6f5" />
          <stop offset="1" stopColor="#8d9196" />
        </linearGradient>
        <linearGradient id="qtb" x1="0" y1="0" x2="0" y2="1">
          <stop offset="0" stopColor="#2456d8" />
          <stop offset="1" stopColor="#5ce6fa" />
        </linearGradient>
      </defs>
      <circle cx="29" cy="29" r="24" fill="url(#qtr)" />
      <circle cx="29" cy="29" r="15.500" fill="url(#qtb)" />
      <path d="M28.500 29L48 47" stroke="#c3c8d0" strokeWidth="9" strokeLinecap="round" />
      <path d="M39 46L46 39.500L52.500 45V52H46Z" fill="#a3a8ac" />
    </Tile>
  );
}

function OneDrive() {
  return (
    <Tile from="#ffffff" to="#fefefe">
      <path d="M13 27A16 16 0 0 1 42.500 24L30 34Z" fill="#2a62b8" />
      <path d="M16 43A11.500 11.500 0 1 1 17 20Q24 20 29 25L40 34L32 43Z" fill="#3173cd" />
      <path d="M28 29L36 24.500A11 11 0 0 1 52 34L47 40Z" fill="#3b86dc" />
      <path d="M6.500 36.500L28 28.500L51.500 38.500Q49.500 43 43 43H16Q9.500 43 6.500 36.500Z" fill="#4398e4" />
    </Tile>
  );
}

function Trash() {
  return (
    <svg width="54" height="70" viewBox="0 0 54 70">
      <defs>
        <linearGradient id="tr" x1="0" y1="0" x2="1" y2="0">
          <stop offset="0" stopColor="#707376" />
          <stop offset="0.400" stopColor="#8e9194" />
          <stop offset="0.750" stopColor="#6d7073" />
          <stop offset="1" stopColor="#505356" />
        </linearGradient>
      </defs>
      <path d="M2 12L8 3L16 6L20 1L28 5L36 2L44 5L52 12L44 18H10Z" fill="#dcdcdc" />
      <path d="M14 6L20 14L26 6Z" fill="#5b5b5b" />
      <path d="M17 10L23 7L25 13L18 15Z" fill="#4cc0b0" />
      <path d="M30 7L38 5L40 14L32 13Z" fill="#5c4640" />
      <path d="M6 8L12 7L13 14Z" fill="#8b8b8b" />
      <path d="M42 8L48 9L44 14Z" fill="#999" />
      <path d="M1.500 11Q27 24 52.500 11L46 63Q45 68 27 68T8 63Z" fill="url(#tr)" opacity="0.960" />
      <path d="M1.500 11Q27 24 52.500 11" fill="none" stroke="#b5b8ba" strokeWidth="1.400" />
      <path d="M20 20Q30 34 40 19" fill="#a9acae" opacity="0.500" />
    </svg>
  );
}

function DownloadStack() {
  return (
    <div className="flex flex-col items-center pb-[3px]">
      <div className="h-[5px] w-[48px] border-2 border-b-0 border-white bg-[#1b1d28]" />
      <div className="h-[5px] w-[54px] border-2 border-b-0 border-white bg-[#1b1d28]" />
      <div className="flex h-[42px] w-[60px] items-center justify-center bg-white p-[2px]">
        <div className="flex h-full w-full items-center justify-center border border-[#e3e3e3]">
          <svg width="26" height="28" viewBox="0 0 26 28" fill="none">
            <path d="M4 21C-1 9 5 2 13 2S27 9 22 21" stroke="#d5d2cd" strokeWidth="2" />
            <path d="M3.500 18L8.500 24L6 26.500Q1.500 23 3.500 18ZM22.500 18L17.500 24L20 26.500Q24.500 23 22.500 18Z" fill="#c5c1bb" />
          </svg>
        </div>
      </div>
    </div>
  );
}

const PAPER = ["w-[46px]", "w-[30px]", "w-[44px]", "w-[20px]", "w-[36px]", "w-[26px]", "w-[48px]", "w-[44px]", "w-[34px]", "w-[48px]", "w-[22px]", "w-[40px]"];

function PageThumb() {
  return (
    <div className="relative h-[68px] w-[56px] bg-[#fbfbfb]">
      <div className="flex h-[10px] items-start gap-px bg-[#3a3c3e] p-px">
        <span className="h-[2px] w-[2px] bg-[#e0554a]" />
        <span className="h-[2px] w-[2px] bg-[#e0b04a]" />
        <span className="h-[2px] w-[2px] bg-[#5ab84c]" />
      </div>
      <div className="flex flex-col gap-[2px] px-[3px] pt-[2px]">
        {PAPER.map((w, i) => (
          <span key={i} className={"h-px bg-[#c2c2c2] " + w} />
        ))}
      </div>
      <div className="mt-[7px] flex gap-1 px-[3px]">
        <span className="h-[3px] w-[11px] bg-[#c5d4e2]" />
        <span className="h-[3px] w-[9px] bg-[#c5d4e2]" />
      </div>
      <div className="mt-[2px] h-px bg-[#9cc3d8]" />
      <div className="absolute -right-[5px] bottom-[1px]"><ChromeGlyph size={22} /></div>
    </div>
  );
}

function NotesThumb() {
  return (
    <div className="relative flex h-[38px] w-[68px] bg-[#1d1d1c]">
      <div className="w-[7px] bg-[#4b4642]"><div className="mt-[3px] h-[2px] bg-[#c9a548]" /></div>
      <div className="flex w-[9px] flex-col gap-[3px] bg-[#2b2523] px-px pt-[4px]">
        <span className="h-[2px] bg-[#6b6562]" />
        <span className="h-px bg-[#6b4a42]" />
        <span className="h-px bg-[#6b4a42]" />
        <span className="h-px bg-[#6b4a42]" />
        <span className="h-px bg-[#6b4a42]" />
      </div>
      <div className="flex grow flex-col gap-[2px] bg-[#1d1d1c] px-[3px] pt-[4px]">
        <span className="h-px w-[12px] bg-[#8b8b8b]" />
        <span className="h-px w-[20px] bg-[#555]" />
        <span className="h-px w-[34px] bg-[#5f5535]" />
        <span className="h-px w-[30px] bg-[#555]" />
        <span className="h-px w-[10px] bg-[#5f5535]" />
      </div>
      <div className="absolute -bottom-[13px] right-[2px] h-[22px] w-[22px] overflow-hidden rounded-[5px] bg-[#f0eeeb]">
        <div className="h-[6px] border-b border-[#bda77a] bg-[#f8cf47]" />
      </div>
    </div>
  );
}

const ROWS = ["w-[24px]", "w-[30px]", "w-[26px]", "w-[30px]", "w-[24px]", "w-[20px]", "w-[22px]"];

function RepoThumb() {
  return (
    <div className="relative h-[65px] w-[68px] bg-[#0e1218]">
      <div className="flex h-[9px] items-start gap-px bg-[#25272b] p-px">
        <span className="h-[2px] w-[2px] bg-[#e0554a]" />
        <span className="h-[2px] w-[2px] bg-[#5ab84c]" />
        <span className="ml-2 h-[2px] w-[36px] bg-[#4a4d52]" />
      </div>
      <div className="flex flex-col gap-[6px] px-[4px] pt-[11px]">
        {ROWS.map((w, i) => (
          <span key={i} className={"h-px bg-[#7d838b] " + w} />
        ))}
      </div>
      <div className="absolute bottom-[1px] right-[2px]"><ChromeGlyph size={21} /></div>
    </div>
  );
}

function Slot({ children, dot, badge }: { children: React.ReactNode; dot?: boolean; badge?: string }) {
  return (
    <div className="relative flex h-[90px] w-[76.670px] shrink-0 items-center justify-center pb-[6px]">
      {children}
      {badge && (
        <span className="absolute left-[47px] top-[5px] flex h-[27px] w-[27px] items-center justify-center rounded-full bg-[#df4b3e] text-[14.500px] text-white">
          {badge}
        </span>
      )}
      {dot && <span className="absolute bottom-[2px] h-2 w-2 rounded-full bg-[#bd98aa]" />}
    </div>
  );
}

function Divider({ wide }: { wide?: boolean }) {
  return (
    <div className={wide ? "flex w-[34px] shrink-0 justify-center pl-[5px]" : "flex w-[33.500px] shrink-0 justify-center pl-[3px]"}>
      <span className="mt-[10px] h-[70px] w-[2px] bg-[#875c6a]" />
    </div>
  );
}

function Dock() {
  return (
    <footer className="relative ml-[58px] mt-1 flex h-[94px] w-[2764px] shrink-0 items-start overflow-hidden rounded-[26px] border-2 border-white/20 bg-[linear-gradient(90deg,#1b1d25_0%,#1c1e26_15%,#351822_18%,#401829_30%,#4d1d1c_40%,#431526_50%,#3a1822_56%,#481a33_66%,#3d1829_72%,#551f1d_85%,#611f14_100%)] pl-[4px]">
      <Slot dot><Finder /></Slot>
      <Slot><Launchpad /></Slot>
      <Slot><Safari /></Slot>
      <Slot dot badge="8"><Messages /></Slot>
      <Slot dot badge="26"><Mail /></Slot>
      <Slot dot><Maps /></Slot>
      <Slot><Photos /></Slot>
      <Slot><FaceTime /></Slot>
      <Slot><CalendarIcon /></Slot>
      <Slot><Contacts /></Slot>
      <Slot><Reminders /></Slot>
      <Slot dot><Notes /></Slot>
      <Slot><Freeform /></Slot>
      <Slot><AppleTV /></Slot>
      <Slot dot><Music /></Slot>
      <Slot><News /></Slot>
      <Slot><AppStore /></Slot>
      <Slot><Settings /></Slot>
      <Slot dot><ChromeGlyph size={58} /></Slot>
      <Slot>
        <span className="flex h-[56px] w-[56px] items-center justify-center rounded-full bg-[#121212]">
          <FaSpotify className="h-[60px] w-[60px] shrink-0 text-[#68d673]" />
        </span>
      </Slot>
      <Slot dot><Terminal /></Slot>
      <Slot><Discord /></Slot>
      <Slot dot><Code dark="#2465a8" mid="#2f7bc8" light="#479fe8" /></Slot>
      <Slot><Code dark="#3f9a80" mid="#4bb095" light="#5bbda6" /></Slot>
      <Slot><D2L /></Slot>
      <Divider />
      <Slot dot><Word /></Slot>
      <Slot dot><Telegram /></Slot>
      <Slot dot><FindMy /></Slot>
      <Slot dot><QuickTime /></Slot>
      <Slot dot><OneDrive /></Slot>
      <Divider wide />
      <Slot><DownloadStack /></Slot>
      <Slot><PageThumb /></Slot>
      <Slot><NotesThumb /></Slot>
      <Slot><RepoThumb /></Slot>
      <Slot><Trash /></Slot>
    </footer>
  );
}

export default function App() {
  return (
    <div className="relative flex h-[1800px] w-[2880px] flex-col overflow-hidden bg-[#04101a] font-['Inter',sans-serif]">
      <Wallpaper />
      <MenuBar />
      <BrowserWindow />
      <Dock />
    </div>
  );
}
